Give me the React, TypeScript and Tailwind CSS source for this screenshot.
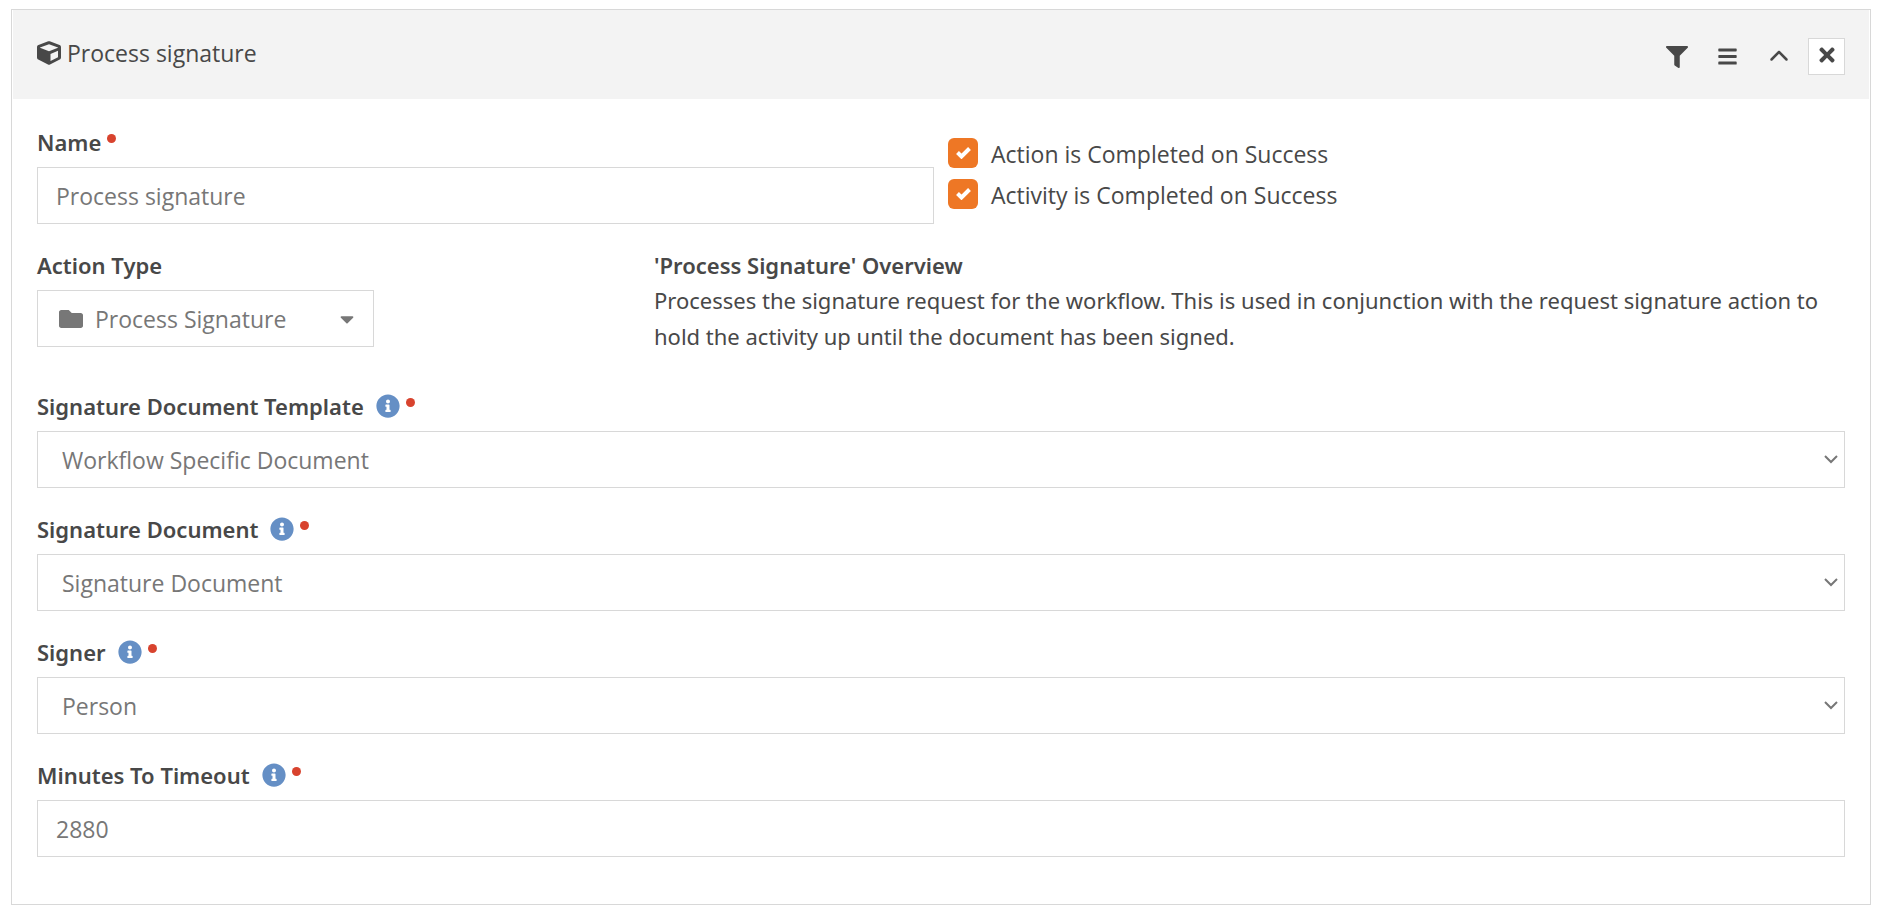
import type { ReactNode } from 'react';
import { FaBars, FaCaretDown, FaCube, FaFilter, FaFolder, FaInfoCircle, FaTimes } from 'react-icons/fa';
import { FaChevronUp } from 'react-icons/fa6';

function FieldLabel({ htmlFor, children, info, required }: { htmlFor: string; children: ReactNode; info?: boolean; required?: boolean }) {
  return (
    <div className="mb-2 flex h-[34px] items-center">
      <label htmlFor={htmlFor} className="font-['Noto_Sans',sans-serif] text-[22px] font-semibold">
        {children}
      </label>
      {info && (
        <button type="button" aria-label="Help" className="ml-3 text-[#658fc5]">
          <FaInfoCircle className="size-6" />
        </button>
      )}
      {required && <span className="mb-2 ml-1.5 size-[9px] rounded-full bg-[#d8432e]" />}
    </div>
  );
}

function TextField({ id, label, value, info }: { id: string; label: string; value: string; info?: boolean }) {
  return (
    <div>
      <FieldLabel htmlFor={id} info={info} required>
        {label}
      </FieldLabel>
      <input id={id} type="text" defaultValue={value} className="block h-[57px] w-full border border-[#d8d8d8] bg-white px-[18px] text-[#777]" />
    </div>
  );
}

function SelectField({ id, label, value }: { id: string; label: string; value: string }) {
  return (
    <div>
      <FieldLabel htmlFor={id} info required>
        {label}
      </FieldLabel>
      <div className="relative">
        <select id={id} defaultValue={value} className="block h-[57px] w-full appearance-none border border-[#d8d8d8] bg-white px-6 text-[#777]">
          <option value={value}>{value}</option>
        </select>
        <svg viewBox="0 0 14 9" className="pointer-events-none absolute top-6 right-[7px] h-[9px] w-3.5" fill="none" stroke="#777" strokeWidth="2">
          <path d="M1 1l6 6 6-6" />
        </svg>
      </div>
    </div>
  );
}

function CheckField({ label }: { label: string }) {
  return (
    <label className="flex h-[41px] gap-[13px] leading-8">
      <span className="relative size-[30px] shrink-0">
        <input type="checkbox" defaultChecked className="block size-[30px] appearance-none rounded-md bg-[#ee7725]" />
        <svg viewBox="0 0 15 12" className="pointer-events-none absolute top-[9px] left-2 h-3 w-[15px]" fill="none" stroke="white" strokeWidth="4">
          <path d="M1.5 5.5l4 4 8-8" />
        </svg>
      </span>
      <span>{label}</span>
    </label>
  );
}

export default function App() {
  return (
    <main className="px-[11px] py-[9px] font-['Open_Sans',sans-serif] text-[23px] leading-9 text-[#484848]">
      <section className="border border-[#d8d8d8] bg-white">
        <header className="mx-px flex h-[89px] items-start justify-between bg-[#f3f3f3] px-6 pt-[25px]">
          <h1 className="flex items-center gap-1.5">
            <FaCube className="size-6" />
            Process signature
          </h1>
          <div className="flex items-center pt-[3px]">
            <button type="button" aria-label="Filter" className="flex h-[37px] w-[51px] items-center justify-center">
              <FaFilter className="size-[22px]" />
            </button>
            <button type="button" aria-label="Reorder" className="flex h-[37px] w-[51px] items-center justify-center">
              <FaBars className="size-[21px]" />
            </button>
            <button type="button" aria-label="Collapse" className="flex h-[37px] w-[51px] items-center justify-center">
              <FaChevronUp className="size-5" />
            </button>
            <button type="button" aria-label="Delete" className="ml-1 flex size-[37px] items-center justify-center border border-[#d8d8d8] bg-white pb-1">
              <FaTimes className="size-[22px]" />
            </button>
          </div>
        </header>
        <form className="flex flex-col gap-6 px-[25px] pt-[26px] pb-[47px]">
          <div className="grid grid-cols-2 gap-3.5">
            <TextField id="name" label="Name" value="Process signature" />
            <div className="pt-[13px]">
              <CheckField label="Action is Completed on Success" />
              <CheckField label="Activity is Completed on Success" />
            </div>
          </div>
          <div className="mb-[11px] grid grid-cols-3 gap-[43px]">
            <div>
              <FieldLabel htmlFor="action-type">Action Type</FieldLabel>
              <button id="action-type" type="button" className="flex h-[57px] w-[337px] items-center border border-[#d8d8d8] bg-white pr-[15px] pl-[21px] text-[#777]">
                <FaFolder className="size-6" />
                <span className="ml-3 flex-1 text-left">Process Signature</span>
                <FaCaretDown className="size-[22px]" />
              </button>
            </div>
            <div className="col-span-2 font-['Noto_Sans',sans-serif] text-[22px]">
              <h2 className="leading-[34px] font-semibold">'Process Signature' Overview</h2>
              <p>
                Processes the signature request for the workflow. This is used in conjunction with the request signature action to hold the activity up until the document has been signed.
              </p>
            </div>
          </div>
          <SelectField id="template" label="Signature Document Template" value="Workflow Specific Document" />
          <SelectField id="document" label="Signature Document" value="Signature Document" />
          <SelectField id="signer" label="Signer" value="Person" />
          <TextField id="timeout" label="Minutes To Timeout" value="2880" info />
        </form>
      </section>
    </main>
  );
}
